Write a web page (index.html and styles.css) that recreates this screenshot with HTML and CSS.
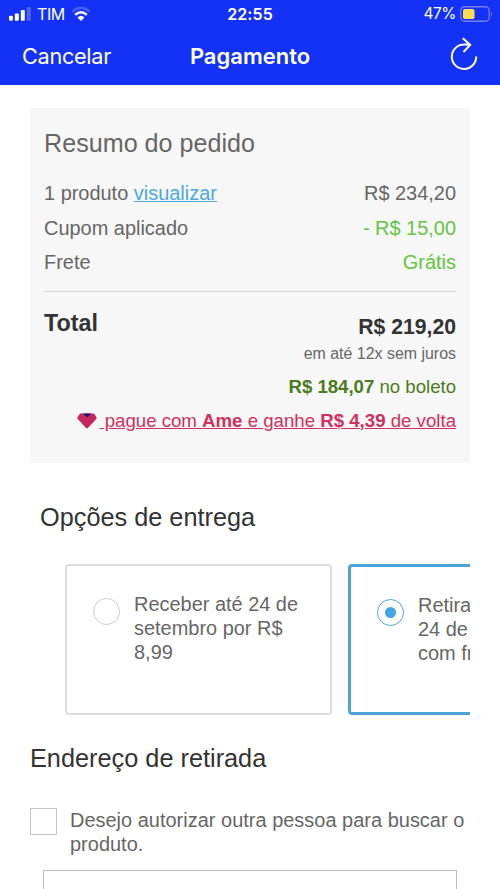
FILE: index.html
```html
<!DOCTYPE html>
<html lang="pt-BR">
<head>
<meta charset="utf-8">
<meta name="viewport" content="width=device-width, initial-scale=1">
<title>Pagamento</title>
<link rel="stylesheet" href="styles.css">
</head>
<body>
<header class="top">
  <div class="status">
    <div class="carrier">
      <svg class="signal" viewBox="0 0 22 14"><rect x="0" y="8.7" width="3.8" height="5" rx="1"/><rect x="5.8" y="6.5" width="4" height="7.2" rx="1"/><rect x="11.8" y="3" width="4" height="10.7" rx="1"/><rect x="17.8" y="0" width="4" height="13.7" rx="1" opacity=".25"/></svg>
      <span class="carrier-name">TIM</span>
      <svg class="wifi" viewBox="0 0 20 15"><g fill="none" stroke="#fff" stroke-width="2.5"><path d="M1.3 5.7Q10-2.2 18.7 5.7" opacity=".22"/><path d="M4.2 8.9Q10 3.7 15.8 8.9"/></g><path d="M6.5 11.4Q10 8.3 13.5 11.4L10 15Z" fill="#fff"/></svg>
    </div>
    <span class="clock">22:55</span>
    <div class="power">
      <span class="percent">47%</span>
      <svg class="battery" viewBox="0 0 33 16"><rect x=".75" y=".75" width="28.5" height="14.5" rx="4" fill="none" stroke="#7480ff" stroke-width="1.3"/><rect x="3" y="3" width="11.5" height="10" rx="1.8" fill="#ffdc52"/><path d="M31 5.5Q33 8 31 10.5Z" fill="#7480ff"/></svg>
    </div>
  </div>
  <nav class="nav">
    <span class="cancel">Cancelar</span>
    <h1 class="title">Pagamento</h1>
    <svg class="reload" viewBox="0 0 28 34"><path d="M20.2 7.9Q17 7.3 14 7.5A12.2 12.2 0 1 0 26.2 19.5M12.8 1.2L20.2 7.9L13.5 15" fill="none" stroke="#fff" stroke-width="2"/></svg>
  </nav>
</header>
<main>
  <section class="summary">
    <h2 class="heading summary-heading">Resumo do pedido</h2>
    <div class="row"><span>1 produto <a class="view">visualizar</a></span><span>R$ 234,20</span></div>
    <div class="row"><span>Cupom aplicado</span><span class="discount">- R$ 15,00</span></div>
    <div class="row"><span>Frete</span><span class="discount">Grátis</span></div>
    <div class="total">
      <strong class="total-label">Total</strong>
      <div class="amounts">
        <strong class="price">R$ 219,20</strong>
        <span class="installments">em até 12x sem juros</span>
        <span class="boleto"><b>R$ 184,07</b> no boleto</span>
      </div>
    </div>
    <div class="cashback">
      <svg class="gem" viewBox="0 0 20 16"><path d="M4 .5H16Q17 .5 17.7 1.4L19.5 4.3Q20 5.2 19.2 6L11.2 14.7Q10 16 8.8 14.7L.8 6Q0 5.2.5 4.3L2.3 1.4Q3 .5 4 .5Z" fill="#c5265c"/><path d="M6 .5H14.3L10.9 3.7Q10.2 4.3 9.4 3.7Z" fill="#17127b"/></svg><a class="ame">&nbsp;pague com <b>Ame</b> e ganhe <b>R$ 4,39</b> de volta</a>
    </div>
  </section>
  <h2 class="heading delivery-heading">Opções de entrega</h2>
  <div class="options">
    <div class="option">
      <span class="radio"></span>
      <p class="option-text">Receber até 24 de<br>setembro por R$<br>8,99</p>
    </div>
    <div class="option selected">
      <span class="radio"></span>
      <p class="option-text">Retirar até<br>24 de setembro<br>com frete grátis</p>
    </div>
  </div>
  <h2 class="heading pickup-heading">Endereço de retirada</h2>
  <div class="authorize">
    <span class="checkbox"></span>
    <p class="authorize-text">Desejo autorizar outra pessoa para buscar o<br>produto.</p>
  </div>
  <div class="field"></div>
</main>
</body>
</html>
```
FILE: styles.css
```css
* { box-sizing: border-box; }
html, body { height: 889px; overflow: hidden; }
body { margin: 0; background: #fff; color: #666; font: 19.95px/24px "Liberation Sans", Arial, sans-serif; }
h1, h2, p { margin: 0; font-weight: 400; }
svg { display: block; flex: none; }
.top { height: 85px; background: #1432f5; color: #fff; font-family: Inter, sans-serif; }
.status { display: grid; grid-template-columns: 1fr auto 1fr; align-items: center; height: 27px; padding: 0 7px 0 9px; font-size: 16px; }
.carrier { display: flex; align-items: center; }
.signal { width: 22px; height: 14px; fill: #fff; }
.carrier-name { margin-left: 6px; letter-spacing: -.4px; font-weight: 400; }
.wifi { width: 20px; height: 15px; margin-left: 6px; }
.clock { font-weight: 600; letter-spacing: .1px; margin-right: 2px; }
.power { display: flex; justify-content: flex-end; align-items: center; gap: 4px; }
.percent { font-size: 15.4px; letter-spacing: -.4px; padding-top: 1px; }
.battery { width: 33px; height: 16px; }
.nav { display: grid; grid-template-columns: 1fr auto 1fr; align-items: center; height: 57px; padding: 0 22px; font-size: 22px; }
.cancel { font-weight: 400; font-size: 21.7px; letter-spacing: -.3px; }
.title { font-size: 22px; font-weight: 600; }
.reload { width: 28px; height: 34px; justify-self: end; margin-bottom: 4px; }
.heading { font-size: 25.3px; line-height: 30px; color: #333; }
.summary { margin: 23px 30px 0; height: 355px; padding: 20px 14px 0; background: #f7f7f7; }
.summary-heading { color: #666; font-size: 25.15px; margin-bottom: 23px; }
.row { display: flex; justify-content: space-between; height: 34.5px; }
.view { color: #4ba9e1; text-decoration: underline; }
.discount { color: #62c544; }
.total { display: flex; justify-content: space-between; border-top: 1px solid #d8d8d8; margin-top: 6px; padding-top: 18px; color: #333; }
.total-label { font-size: 23.3px; line-height: 26px; }
.amounts { display: flex; flex-direction: column; align-items: flex-end; padding-top: 5px; }
.price { font-size: 21.2px; line-height: 24px; }
.installments { color: #666; font-size: 15.95px; line-height: 20px; margin-top: 5px; }
.boleto { color: #4b7b21; font-size: 18.6px; margin-top: 11px; }
.cashback { display: flex; justify-content: flex-end; align-items: center; height: 24px; margin-top: 10px; }
.gem { width: 20px; height: 16px; margin-right: 2px; }
.ame { color: #d12f60; font-size: 18.65px; text-decoration: underline; white-space: nowrap; }
.delivery-heading { margin: 39px 0 0 40px; }
.options { display: flex; gap: 16px; margin: 32px 30px 0 65px; overflow: hidden; }
.option { flex: none; display: flex; width: 267px; height: 151px; padding: 26px 26px; border: 2px solid #dedede; border-radius: 4px; }
.option.selected { border: 3px solid #4ba3d8; }
.radio { flex: none; display: grid; place-items: center; width: 27px; height: 27px; margin-top: 6px; border: 1.5px solid #ccc; border-radius: 50%; }
.selected .radio { border-color: #4ba3d8; }
.selected .radio::after { content: ""; width: 11px; height: 11px; border-radius: 50%; background: #41a5e8; }
.option-text { margin-left: 14px; white-space: nowrap; }
.pickup-heading { margin: 28px 0 0 30px; }
.authorize { display: flex; margin: 35px 30px 0; }
.checkbox { flex: none; width: 27px; height: 27px; border: 1px solid #c6c6c6; }
.authorize-text { margin-left: 13px; white-space: nowrap; letter-spacing: .02px; }
.field { height: 60px; margin: 14px 43px 0; border: 1px solid #bbb; }
```
